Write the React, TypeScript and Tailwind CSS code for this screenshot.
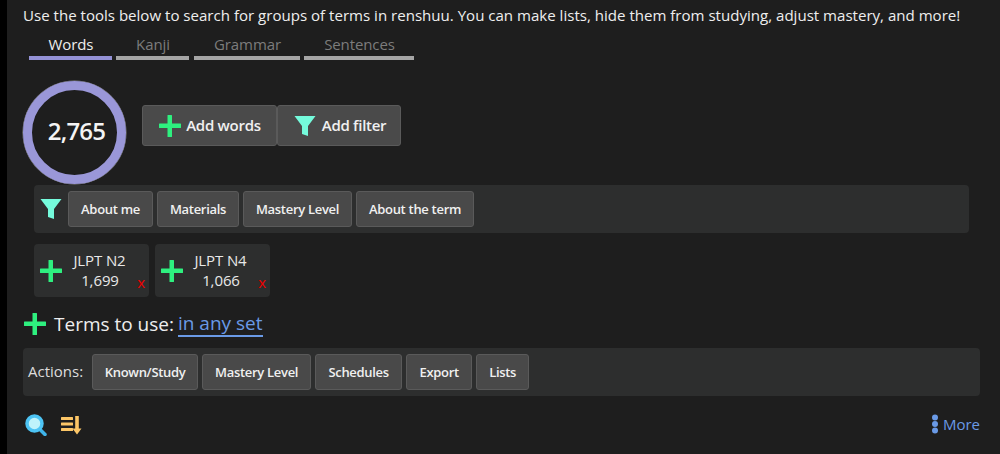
const PlusIcon = ({ size = 24 }: { size?: number }) => (
  <svg width={size} height={size} viewBox="0 0 24 24" fill="#2ef07f" className="shrink-0">
    <rect x="9.5" y="1" width="4.5" height="22" rx="0.5" />
    <rect x="1" y="9.5" width="22" height="4.5" rx="0.5" />
  </svg>
);

const FilterIcon = () => (
  <svg width="22" height="22" viewBox="0 0 22 22" fill="#75fbdc" className="shrink-0">
    <path d="M0.5 1h21l-7.5 10v10l-6 -2v-8z" />
  </svg>
);

const tabs = [
  { label: "Words", w: "w-[83px]", active: true },
  { label: "Kanji", w: "w-[73px]" },
  { label: "Grammar", w: "w-[106px] ml-px" },
  { label: "Sentences", w: "w-[110px]" },
];

const Btn = ({ label, w }: { label: string; w: string }) => (
  <button className={`${w} h-[36px] rounded-[3px] border border-[#5a5a5a] bg-[#494949] pt-[2px] text-[13px] font-semibold text-[#f0f0f0] tracking-[-0.3px]`}>
    {label}
  </button>
);

const SetCard = ({ name, count }: { name: string; count: string }) => (
  <div className="relative flex h-[53px] w-[115px] items-center rounded-[4px] bg-[#2d2e2e] pl-[5px]">
    <PlusIcon />
    <div className="ml-[9px] flex w-[58px] flex-col items-center pb-[2px] text-[15px] leading-[20px] tracking-[-0.1px] text-[#e8e8e8]">
      <span className="-ml-[3px]">{name}</span>
      <span className="-ml-[2px]">{count}</span>
    </div>
    <span className="absolute bottom-[6px] right-[4px] text-[15px] leading-[18px] text-[#f00000]">x</span>
  </div>
);

export default function App() {
  return (
    <div className="flex h-[454px] w-[1000px] overflow-hidden bg-[#1e1e1e] font-['Open_Sans',sans-serif]">
      <div className="w-[7px] shrink-0 bg-black" />
      <div className="flex min-w-0 flex-1 flex-col pt-[5px] pl-[16px]">
        <p className="h-[20px] whitespace-nowrap text-[15.07px] leading-[20px] text-[#eeeeee]">
          Use the tools below to search for groups of terms in renshuu. You can make lists, hide them from studying, adjust mastery, and more!
        </p>

        <div className="mt-[10px] ml-[6px] flex gap-[4px]">
          {tabs.map((t) => (
            <div
              key={t.label}
              className={`${t.w} h-[25px] border-b-[4px] pl-px text-center text-[15px] leading-[18px] tracking-[-0.1px] ${
                t.active ? "border-[#9492d6] text-[#eeeeee]" : "border-[#a5a5a5] text-[#7c7c7c]"
              }`}
            >
              {t.label}
            </div>
          ))}
        </div>

        <div className="mt-[21px] flex items-start">
          <div className="box-border flex size-[103px] shrink-0 items-center justify-center rounded-full border-[9px] border-[#9a97d8] pb-[3px] pl-[4px] text-[24px] font-semibold tracking-[-0.8px] text-[#f4f4f4] shadow-[0_0_0_1px_#8a8a8a] [box-shadow:inset_0_0_0_1px_#1e1e1e,0_0_0_0.5px_#8a8a8a]">
            2,765
          </div>
          <div className="mt-[24px] ml-[16px] flex">
            <button className="flex h-[41px] w-[135px] items-center justify-center gap-[4px] rounded-[3px] border border-[#5a5a5a] bg-[#4a4a4a] text-[15px] font-semibold tracking-[-0.25px] text-[#f0f0f0]">
              <PlusIcon />
              Add words
            </button>
            <button className="flex h-[41px] w-[124px] items-center justify-center gap-[6px] rounded-[3px] border border-[#5a5a5a] bg-[#4a4a4a] pl-[2px] text-[15px] font-semibold tracking-[-0.3px] text-[#f0f0f0]">
              <FilterIcon />
              Add filter
            </button>
          </div>
        </div>

        <div className="mt-px ml-[11px] flex h-[48px] w-[935px] items-center gap-[4px] rounded-[4px] bg-[#2d2e2e] pl-[6px]">
          <span className="mr-[2px] flex"><FilterIcon /></span>
          <Btn label="About me" w="w-[85px]" />
          <Btn label="Materials" w="w-[82px]" />
          <Btn label="Mastery Level" w="w-[109px]" />
          <Btn label="About the term" w="w-[118px]" />
        </div>

        <div className="mt-[11px] ml-[11px] flex gap-[6px]">
          <SetCard name="JLPT N2" count="1,699" />
          <SetCard name="JLPT N4" count="1,066" />
        </div>

        <div className="mt-[13px] flex h-[28px] items-center text-[19px] text-[#eeeeee]">
          <span className="mr-[7px] flex"><PlusIcon /></span>
          Terms to use:
          <span className="ml-[4px] border-b-2 border-[#6a9ae6] leading-[24px] text-[#6a9ae6]">in any set</span>
        </div>

        <div className="mt-[10px] flex h-[48px] w-[957px] items-center gap-[4px] rounded-[4px] bg-[#2d2e2e] pl-[5px]">
          <span className="mr-[5px] pb-[1px] text-[15px] text-[#dddddd]">Actions:</span>
          <Btn label="Known/Study" w="w-[106px]" />
          <Btn label="Mastery Level" w="w-[109px]" />
          <Btn label="Schedules" w="w-[87px]" />
          <Btn label="Export" w="w-[66px]" />
          <Btn label="Lists" w="w-[53px]" />
        </div>

        <div className="mt-[18px] flex w-[957px] items-center justify-between pl-[2px]">
          <div className="flex items-center gap-[14px]">
            <svg width="22" height="22" viewBox="0 0 22 22">
              <path d="M14 14.5l6 6" stroke="#3fb4ea" strokeWidth="3.5" strokeLinecap="round" />
              <circle cx="9.5" cy="9.5" r="7.5" fill="#bff3fb" stroke="#4dc4f4" strokeWidth="3.5" />
            </svg>
            <svg width="22" height="22" viewBox="0 0 22 22" fill="#fcc667">
              <rect x="0" y="3" width="12" height="3" rx="0.5" />
              <rect x="0" y="8.5" width="12" height="3" rx="0.5" />
              <rect x="0" y="14" width="12" height="3" rx="0.5" />
              <path d="M14.2 2h3.6v12.5h2.7l-4.5 6 -4.5-6h2.7z" />
            </svg>
          </div>
          <div className="-mt-[2px] flex items-center gap-[4px] text-[15px] text-[#6a9ae6]">
            <svg width="8" height="20" viewBox="0 0 8 20" fill="#6a9ae6">
              <circle cx="4" cy="3.5" r="3" />
              <circle cx="4" cy="10" r="3" />
              <circle cx="4" cy="16.5" r="3" />
            </svg>
            More
          </div>
        </div>
      </div>
    </div>
  );
}
